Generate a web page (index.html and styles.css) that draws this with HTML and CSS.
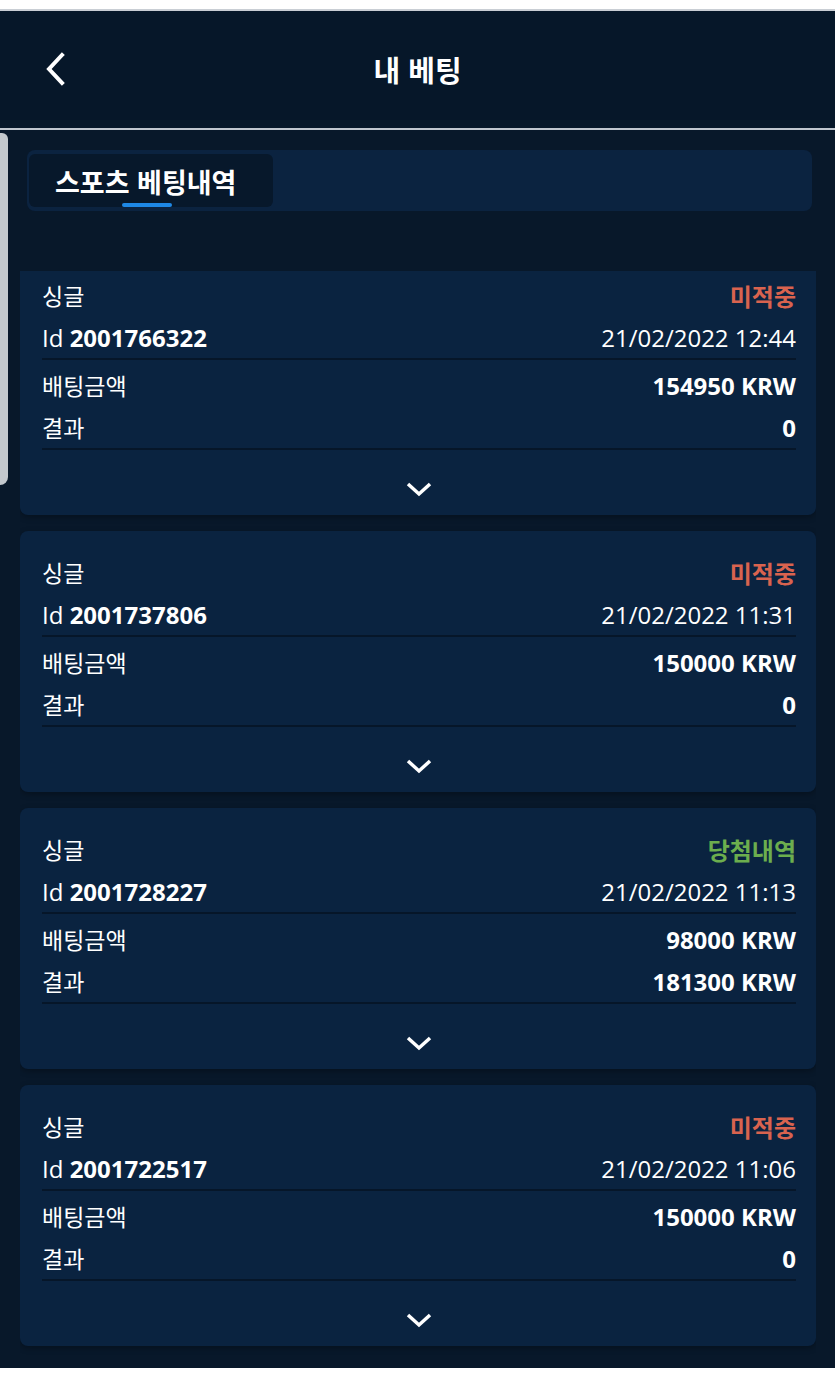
FILE: index.html
```html
<!DOCTYPE html>
<html lang="ko">
<head>
    <meta charset="UTF-8">
    <meta name="viewport" content="width=device-width, initial-scale=1.0">
    <title>내 베팅</title>
    <link rel="stylesheet" href="styles.css">
</head>
<body>
    <div class="screen">
        <header class="topbar">
            <button class="back-button" aria-label="뒤로">
                <svg width="22" height="34" viewBox="0 0 22 34"><path d="M18 3 L5 17 L18 31" fill="none" stroke="#fff" stroke-width="4" stroke-linecap="square"/></svg>
            </button>
            <h1>내 베팅</h1>
        </header>

        <main class="content">
            <div class="scroll-thumb"></div>

            <div class="tabs">
                <div class="tab active">스포츠 베팅내역</div>
            </div>

            <div class="bet-list">
                <div class="bet-card">
                    <div class="row"><span class="label">싱글</span><span class="status lost">미적중</span></div>
                    <div class="row"><span>Id <b>2001766322</b></span><span>21/02/2022 12:44</span></div>
                    <div class="amounts">
                        <div class="row"><span class="label">배팅금액</span><b>154950 KRW</b></div>
                        <div class="row"><span class="label">결과</span><b>0</b></div>
                    </div>
                    <div class="expand">
                        <svg width="28" height="16" viewBox="0 0 28 16"><path d="M3 3 L14 13 L25 3" fill="none" stroke="#fff" stroke-width="3.5"/></svg>
                    </div>
                </div>

                <div class="bet-card">
                    <div class="row"><span class="label">싱글</span><span class="status lost">미적중</span></div>
                    <div class="row"><span>Id <b>2001737806</b></span><span>21/02/2022 11:31</span></div>
                    <div class="amounts">
                        <div class="row"><span class="label">배팅금액</span><b>150000 KRW</b></div>
                        <div class="row"><span class="label">결과</span><b>0</b></div>
                    </div>
                    <div class="expand">
                        <svg width="28" height="16" viewBox="0 0 28 16"><path d="M3 3 L14 13 L25 3" fill="none" stroke="#fff" stroke-width="3.5"/></svg>
                    </div>
                </div>

                <div class="bet-card">
                    <div class="row"><span class="label">싱글</span><span class="status won">당첨내역</span></div>
                    <div class="row"><span>Id <b>2001728227</b></span><span>21/02/2022 11:13</span></div>
                    <div class="amounts">
                        <div class="row"><span class="label">배팅금액</span><b>98000 KRW</b></div>
                        <div class="row"><span class="label">결과</span><b>181300 KRW</b></div>
                    </div>
                    <div class="expand">
                        <svg width="28" height="16" viewBox="0 0 28 16"><path d="M3 3 L14 13 L25 3" fill="none" stroke="#fff" stroke-width="3.5"/></svg>
                    </div>
                </div>

                <div class="bet-card">
                    <div class="row"><span class="label">싱글</span><span class="status lost">미적중</span></div>
                    <div class="row"><span>Id <b>2001722517</b></span><span>21/02/2022 11:06</span></div>
                    <div class="amounts">
                        <div class="row"><span class="label">배팅금액</span><b>150000 KRW</b></div>
                        <div class="row"><span class="label">결과</span><b>0</b></div>
                    </div>
                    <div class="expand">
                        <svg width="28" height="16" viewBox="0 0 28 16"><path d="M3 3 L14 13 L25 3" fill="none" stroke="#fff" stroke-width="3.5"/></svg>
                    </div>
                </div>
            </div>
        </main>
    </div>
</body>
</html>
```

FILE: styles.css
```css
* {
    box-sizing: border-box;
}
body {
    margin: 0;
    background: #fff;
    font-family: 'Open Sans', 'Noto Sans', 'Noto Sans CJK KR', sans-serif;
    color: #fff;
}
.screen {
    margin-top: 9px;
    border-top: 2px solid #c9ced4;
    height: 1359px;
    background: #08182a;
    display: flex;
    flex-direction: column;
    overflow: hidden;
}
.topbar {
    height: 119px;
    flex-shrink: 0;
    background: #061729;
    border-bottom: 2px solid #bfc6ce;
    display: flex;
    align-items: center;
    justify-content: center;
    position: relative;
}
.topbar h1 {
    margin: 0 0 2px;
    font-family: 'Noto Sans CJK KR', sans-serif;
    font-size: 29px;
    font-weight: 700;
}
.back-button {
    position: absolute;
    left: 44px;
    top: 41px;
    background: none;
    border: none;
    padding: 0;
    cursor: pointer;
}
.content {
    position: relative;
    flex: 1;
    padding: 20px 19px 0 20px;
    display: flex;
    flex-direction: column;
    min-height: 0;
}
.scroll-thumb {
    position: absolute;
    left: 0;
    top: 3px;
    width: 8px;
    height: 352px;
    background: #c3c8cd;
    border-radius: 0 6px 8px 0;
}
.tabs {
    margin: 0 4px 0 7px;
    height: 61px;
    background: #0b2340;
    border-radius: 8px;
    padding: 4px 2px;
    display: flex;
}
.tab {
    width: 244px;
    border-radius: 6px;
    background: #07182b;
    font-family: 'Noto Sans CJK KR', sans-serif;
    font-size: 27px;
    font-weight: 700;
    padding: 8px 0 0 26px;
    position: relative;
}
.tab.active::after {
    content: '';
    position: absolute;
    left: 93px;
    bottom: 0;
    width: 50px;
    height: 4px;
    border-radius: 2px;
    background: #1e88e5;
}
.bet-list {
    margin-top: 60px;
    overflow: hidden;
    flex: 1;
    display: flex;
    flex-direction: column;
    gap: 16px;
}
.bet-card {
    flex-shrink: 0;
    background: #0a2340;
    border-radius: 8px;
    padding: 20px 20px 0 22px;
    box-shadow: 0 2px 6px rgba(0, 0, 0, 0.3);
}
.bet-card:first-child {
    margin-top: -17px;
}
.row {
    display: flex;
    justify-content: space-between;
    align-items: center;
    height: 42px;
    font-size: 24px;
}
.row b {
    font-weight: 700;
}
.row .label {
    font-size: 23px;
}
.status {
    font-family: 'Noto Sans CJK KR', sans-serif;
    font-weight: 600;
    font-size: 24px;
}
.status.lost {
    color: #d9634f;
}
.status.won {
    color: #6cae4e;
}
.amounts {
    border-top: 2px solid #061629;
    border-bottom: 2px solid #061629;
    padding: 4px 0 0;
}
.expand {
    height: 65px;
    display: flex;
    justify-content: center;
    padding-top: 31px;
}
```
